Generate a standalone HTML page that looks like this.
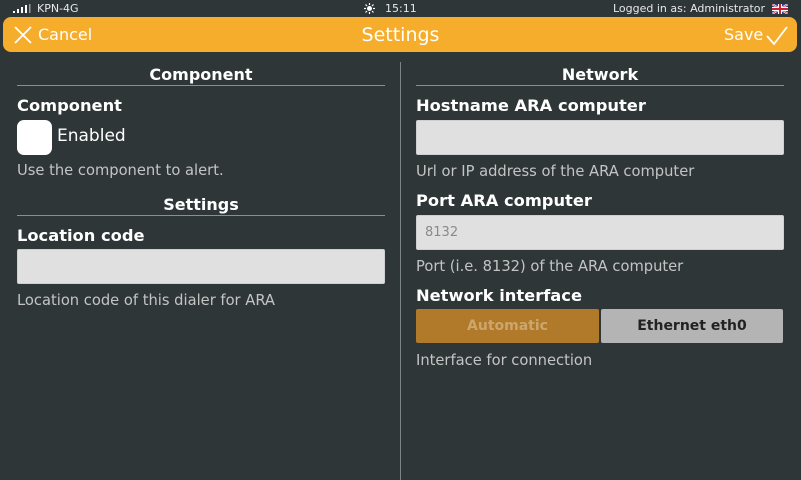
<!DOCTYPE html>
<html><head><meta charset="utf-8"><style>
body{margin:0;width:801px;height:480px;background:#2f3638;font-family:"DejaVu Sans","Liberation Sans",sans-serif;color:#fff;position:relative;overflow:hidden}
svg{display:block}
.a{position:absolute;white-space:nowrap}
.st{font-size:11px;color:#e8e8e8;top:2px}
.hdr{position:absolute;left:3px;top:17px;width:794px;height:35px;background:#f5ad2b;border-radius:8px}
.sec{font-size:16px;text-align:center;font-weight:bold}
.line{position:absolute;height:1px;background:#8a8f90}
.lbl{font-size:16.3px;font-weight:bold}
.hlp{font-size:14.7px;color:#c4c4c4}
.inp{position:absolute;background:#e0e0e0;border:1px solid #cfcfcf;border-radius:2px;height:33px}
</style></head><body>
<div class="a" style="left:13px;top:4px">
<svg width="18" height="10"><rect x="0" y="7" width="2" height="2" fill="#fff"/><rect x="4" y="5" width="2" height="4" fill="#fff"/><rect x="8" y="3" width="2" height="6" fill="#fff"/><rect x="12" y="1" width="2" height="8" fill="#fff"/><rect x="16" y="0" width="1.5" height="9" fill="#999"/></svg></div>
<div class="a st" style="left:37px">KPN-4G</div>
<div class="a" style="left:364px;top:3px"><svg width="11" height="11"><circle cx="5.5" cy="5.5" r="2.5" fill="#fff"/><g stroke="#fff" stroke-width="1.2"><line x1="5.5" y1="0" x2="5.5" y2="2"/><line x1="5.5" y1="9" x2="5.5" y2="11"/><line x1="0" y1="5.5" x2="2" y2="5.5"/><line x1="9" y1="5.5" x2="11" y2="5.5"/><line x1="1.5" y1="1.5" x2="3" y2="3"/><line x1="8" y1="8" x2="9.5" y2="9.5"/><line x1="9.5" y1="1.5" x2="8" y2="3"/><line x1="1.5" y1="9.5" x2="3" y2="8"/></g></svg></div>
<div class="a st" style="left:385px">15:11</div>
<div class="a st" style="left:613px">Logged in as: Administrator</div>
<div class="a" style="left:772px;top:4px"><svg width="16" height="10"><rect width="16" height="10" fill="#2a3f8f"/><path d="M0 0L16 10M16 0L0 10" stroke="#fff" stroke-width="2"/><path d="M0 0L16 10M16 0L0 10" stroke="#c8202f" stroke-width="0.7"/><rect x="6" y="0" width="4" height="10" fill="#fff"/><rect x="0" y="3" width="16" height="4" fill="#fff"/><rect x="7" y="0" width="2" height="10" fill="#c8202f"/><rect x="0" y="4" width="16" height="2" fill="#c8202f"/></svg></div>
<div class="hdr"></div>
<div class="a" style="left:14px;top:26px"><svg width="18" height="18"><path d="M1 1L17 17M17 1L1 17" stroke="#fff" stroke-width="1.8"/></svg></div>
<div class="a" style="left:38px;top:25px;font-size:16px">Cancel</div>
<div class="a" style="left:0;width:801px;text-align:center;top:24px;font-size:19px">Settings</div>
<div class="a" style="left:724px;top:25px;font-size:16px">Save</div>
<div class="a" style="left:766px;top:26px"><svg width="22" height="20"><path d="M1 10L8 18L21 1" stroke="#fff" stroke-width="1.8" fill="none"/></svg></div>

<div style="position:absolute;left:400px;top:62px;width:1px;height:418px;background:#7d8283"></div>

<div class="a sec" style="left:17px;width:368px;top:65px">Component</div>
<div class="line" style="left:17px;width:368px;top:85px"></div>
<div class="a lbl" style="left:17px;top:96px">Component</div>
<div style="position:absolute;left:17px;top:120px;width:35px;height:35px;background:#fff;border-radius:7px"></div>
<div class="a" style="left:57px;top:126px;font-size:17px">Enabled</div>
<div class="a hlp" style="left:17px;top:162px">Use the component to alert.</div>
<div class="a sec" style="left:17px;width:368px;top:195px">Settings</div>
<div class="line" style="left:17px;width:368px;top:215px"></div>
<div class="a lbl" style="left:17px;top:226px">Location code</div>
<div class="inp" style="left:17px;top:249px;width:366px"></div>
<div class="a hlp" style="left:17px;top:292px">Location code of this dialer for ARA</div>

<div class="a sec" style="left:416px;width:368px;top:65px">Network</div>
<div class="line" style="left:416px;width:368px;top:85px"></div>
<div class="a lbl" style="left:416px;top:96px">Hostname ARA computer</div>
<div class="inp" style="left:416px;top:120px;width:366px"></div>
<div class="a hlp" style="left:416px;top:163px">Url or IP address of the ARA computer</div>
<div class="a lbl" style="left:416px;top:191px">Port ARA computer</div>
<div class="inp" style="left:416px;top:215px;width:366px"></div>
<div class="a" style="left:425px;top:225px;font-size:13px;color:#8a8a8a">8132</div>
<div class="a hlp" style="left:416px;top:258px">Port (i.e. 8132) of the ARA computer</div>
<div class="a lbl" style="left:416px;top:286px">Network interface</div>
<div style="position:absolute;left:416px;top:309px;width:183px;height:34px;background:#b07a2a;border-radius:2px;color:#cda66c;font-size:14px;font-weight:bold;text-align:center;line-height:34px">Automatic</div>
<div style="position:absolute;left:601px;top:309px;width:182px;height:34px;background:#b4b4b4;border-radius:2px;color:#222;font-size:14px;font-weight:bold;text-align:center;line-height:34px">Ethernet eth0</div>
<div class="a hlp" style="left:416px;top:352px">Interface for connection</div>
</body></html>
